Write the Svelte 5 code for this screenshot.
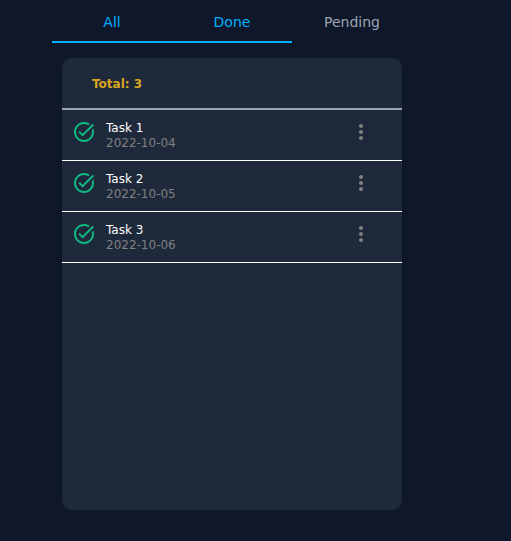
<script>
  const tabs = [
    { name: 'All', active: true },
    { name: 'Done', active: true },
    { name: 'Pending', active: false }
  ];
  const tasks = [
    { title: 'Task 1', date: '2022-10-04' },
    { title: 'Task 2', date: '2022-10-05' },
    { title: 'Task 3', date: '2022-10-06' }
  ];
</script>

<main>
  <nav>
    {#each tabs as tab}
      <button class="tab" class:active={tab.active}>{tab.name}</button>
    {/each}
  </nav>
  <section class="panel">
    <h2>Total: {tasks.length}</h2>
    <ul>
      {#each tasks as task}
        <li>
          <svg class="check" viewBox="0 0 24 24" aria-hidden="true">
            <path d="M22 5.18L10.59 16.6l-4.24-4.24 1.41-1.41 2.83 2.83 10-10L22 5.18zm-2.21 5.04c.13.57.21 1.17.21 1.78 0 4.42-3.58 8-8 8s-8-3.58-8-8 3.58-8 8-8c1.58 0 3.04.46 4.28 1.25l1.44-1.44C16.1 2.67 14.13 2 12 2 6.48 2 2 6.48 2 12s4.48 10 10 10 10-4.48 10-10c0-1.19-.22-2.33-.6-3.39l-1.61 1.61z" />
          </svg>
          <div class="info">
            <span>{task.title}</span>
            <time datetime={task.date}>{task.date}</time>
          </div>
          <button class="more" aria-label="Options for {task.title}">
            <svg viewBox="0 0 24 24" aria-hidden="true">
              <path d="M12 8c1.1 0 2-.9 2-2s-.9-2-2-2-2 .9-2 2 .9 2 2 2zm0 2c-1.1 0-2 .9-2 2s.9 2 2 2 2-.9 2-2-.9-2-2-2zm0 6c-1.1 0-2 .9-2 2s.9 2 2 2 2-.9 2-2-.9-2-2-2z" />
            </svg>
          </button>
        </li>
      {/each}
    </ul>
  </section>
</main>

<style>
  :global(body) {
    margin: 0;
    background: #0f172a;
    font-family: Verdana, 'DejaVu Sans', sans-serif;
  }
  main {
    max-width: 360px;
    margin-left: 52px;
    padding-bottom: 31px;
  }
  nav {
    display: flex;
  }
  button {
    border: 0;
    padding: 0;
    background: none;
    font-family: inherit;
    cursor: pointer;
  }
  .tab {
    flex: 1;
    height: 43px;
    padding-top: 2px;
    border-bottom: 2px solid transparent;
    color: #9ca3af;
    font-size: 14px;
  }
  .tab.active {
    color: #00b0ff;
    border-bottom-color: #00b0ff;
  }
  .panel {
    box-sizing: border-box;
    min-height: 452px;
    margin: 15px 10px 0;
    border-radius: 10px;
    background: #1e293b;
  }
  h2 {
    margin: 0;
    padding: 2px 30px 0;
    border-bottom: 2px solid #9ca3af;
    color: #daa520;
    font-size: 12px;
    line-height: 48px;
  }
  ul {
    margin: 0;
    padding: 0;
    list-style: none;
  }
  li {
    display: flex;
    align-items: flex-start;
    padding: 10px 29px 9px 10px;
    border-bottom: 1px solid #fff;
  }
  svg {
    display: block;
    width: 24px;
    height: 24px;
  }
  .check {
    fill: #10b981;
  }
  .info {
    display: flex;
    flex: 1;
    flex-direction: column;
    margin-left: 10px;
    padding-top: 1px;
    color: #fff;
    font-size: 12px;
    line-height: 15px;
  }
  time {
    color: #808080;
  }
  .more {
    fill: #808080;
  }
</style>
